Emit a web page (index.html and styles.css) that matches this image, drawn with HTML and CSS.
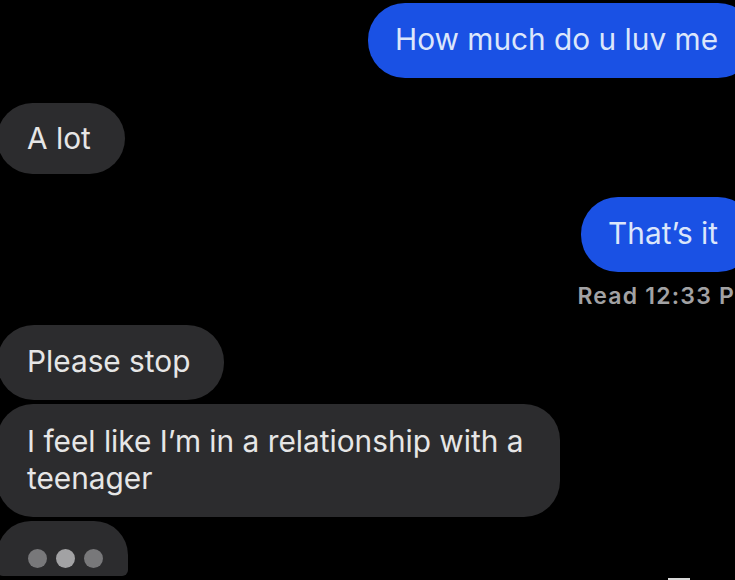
FILE: index.html
```html
<!DOCTYPE html>
<html>
<head>
<meta charset="utf-8">
<link rel="stylesheet" href="styles.css">
</head>
<body>
<div class="thread">
  <div class="row out first"><div class="bubble blue">How much do u luv me</div></div>
  <div class="row in gap1"><div class="bubble gray tail short">A lot</div></div>
  <div class="row out gap2"><div class="bubble blue">That’s it</div></div>
  <div class="row out"><div class="read">Read 12:33 P</div></div>
  <div class="row in gap3"><div class="bubble gray">Please stop</div></div>
  <div class="row in tight"><div class="bubble gray multi">I feel like I’m in a relationship with a teenager</div></div>
  <div class="row in tight"><div class="bubble gray typing"><span class="dot dim"></span><span class="dot lit"></span><span class="dot dim"></span></div></div>
</div>
<div class="home-bar"></div>
</body>
</html>
```
FILE: styles.css
```css
html, body {
  margin: 0;
  padding: 0;
  background: #000;
}
body {
  width: 735px;
  height: 580px;
  overflow: hidden;
  position: relative;
  font-family: Inter, "Noto Sans", sans-serif;
}
.thread {
  display: flex;
  flex-direction: column;
}
.row {
  display: flex;
}
.row.out {
  justify-content: flex-end;
}
.row.in {
  justify-content: flex-start;
}
.row.first { margin-top: 3px; }
.row.gap1 { margin-top: 25px; }
.row.gap2 { margin-top: 23px; }
.row.gap3 { margin-top: 16px; }
.row.tight { margin-top: 4px; }

.bubble {
  font-size: 29.8px;
  line-height: 37px;
  padding: 18px 27px 20px;
  border-radius: 37px;
  position: relative;
  white-space: nowrap;
}
.bubble.blue {
  background: #1a51e4;
  color: #dce6fb;
  margin-right: -20px;
  padding-left: 27px;
  padding-right: 37px;
}
.bubble.gray {
  background: #2c2c2e;
  color: #e6e6e6;
  margin-left: -3px;
  padding-left: 30px;
  padding-right: 34px;
}
.bubble.short {
  padding-top: 17px;
  padding-bottom: 17px;
}
.bubble.tail::after {
  content: "";
  position: absolute;
  left: 4px;
  bottom: -7px;
  width: 22px;
  height: 10px;
  background: #1d1d1f;
  border-radius: 50% 50% 0 0 / 100% 100% 0 0;
  z-index: -1;
}
.bubble.multi {
  white-space: normal;
  width: 503px;
  padding-top: 19px;
  padding-bottom: 20px;
  padding-right: 30px;
  border-radius: 36px;
}
.bubble.typing {
  display: flex;
  align-items: flex-start;
  gap: 9px;
  padding: 28px 25px 8px 31px;
  height: 19px;
  border-radius: 34px 34px 6px 6px;
}
.dot {
  width: 19px;
  height: 19px;
  border-radius: 50%;
  display: block;
  flex: none;
}
.dot.dim { background: #78787a; }
.dot.lit { background: #a2a2a4; }

.read {
  margin-top: 11px;
  margin-right: 0;
  font-size: 23px;
  line-height: 26px;
  font-weight: 600;
  letter-spacing: 1.2px;
  color: #a2a2a4;
  white-space: nowrap;
}
.home-bar {
  position: absolute;
  left: 668px;
  bottom: 0;
  width: 22px;
  height: 2px;
  background: #d8d8d8;
}
```
